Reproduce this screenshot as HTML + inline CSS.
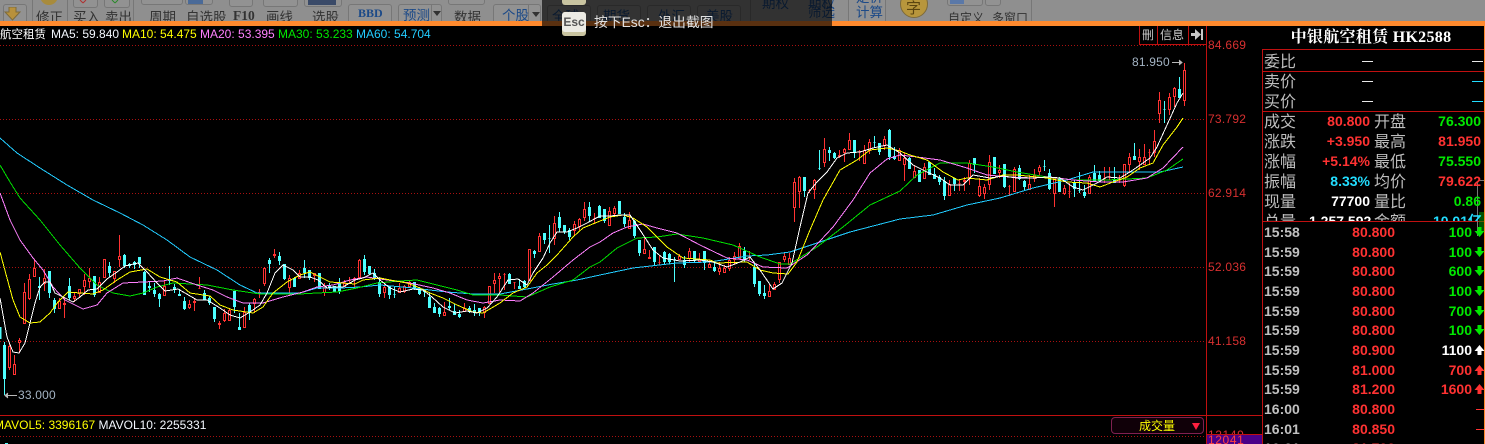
<!DOCTYPE html>
<html lang="zh"><head><meta charset="utf-8"><title>中银航空租赁</title>
<style>
html,body{margin:0;padding:0;background:#000;width:1485px;height:444px;overflow:hidden}
body{position:relative;font-family:"Liberation Sans","Noto Sans CJK SC",sans-serif}
.a{position:absolute;white-space:nowrap}
#tb{position:absolute;left:0;top:0;width:1485px;height:21px;background:#8f8f8f;overflow:hidden}
#tb .b{position:absolute;border:1px solid #777;border-radius:3px;box-sizing:border-box;background:#929292}
#tb .l{position:absolute;top:7px;font:13.5px/18px "WenQuanYi Zen Hei","Noto Sans CJK SC",sans-serif;color:#333;white-space:nowrap}
#tb .u{color:#1c4a88}
#tb .s{position:absolute;top:0;width:1px;height:21px;background:#777}
#or{position:absolute;left:0;top:21px;width:1485px;height:5px;background:#ff8a2e}
#ov{position:absolute;left:542px;top:0;width:290px;height:26px;background:rgba(0,0,0,.65)}
.ax{position:absolute;left:1208px;font-size:12px;line-height:14px;color:#d83030;letter-spacing:.25px}
.lb{position:absolute;font:16px/18px "WenQuanYi Zen Hei","Noto Sans CJK SC",sans-serif;color:#bdbdbd;white-space:nowrap}
.n{position:absolute;font:bold 14px/16px "Liberation Sans",sans-serif;white-space:nowrap;text-align:right}
.r{color:#ff3232}.g{color:#00e800}.c{color:#22ddff}.w{color:#fff}.t{color:#c0c0c0}
.v1{right:115px}.v2{right:4px}
.tm{left:1264px}.pr{right:90px}.vo{right:13px}
</style></head><body>

<div id="tb">
<div class="s" style="left:32px"></div><div class="s" style="left:67px"></div><div class="s" style="left:133px"></div><div class="s" style="left:750px"></div><div class="s" style="left:1031px"></div>
<div class="b" style="left:3px;top:4px;width:24px;height:30px"></div>
<svg class="a" style="left:4px;top:7px" width="20" height="14"><path d="M5 0h7v5h4l-7.500 8L1 5h4z" fill="#b8913c" stroke="#7d6a3a"/></svg>
<div class="a" style="left:40px;top:-13px;width:18px;height:18px;border-radius:50%;background:#a88b3c"></div>
<div class="l" style="left:36px">修正</div>
<div class="b" style="left:73px;top:-12px;width:25px;height:20px"></div><div class="b" style="left:104px;top:-12px;width:26px;height:20px"></div>
<svg class="a" style="left:78px;top:0" width="48" height="4"><path d="M2 0l3 3M8 0L5 3" stroke="#b03030" fill="none"/><path d="M34 0l3 3M40 0l-3 3" stroke="#2a8a2a" fill="none"/></svg>
<div class="l" style="left:73px">买入</div><div class="l" style="left:105px">卖出</div>
<div class="b" style="left:141px;top:-12px;width:42px;height:17px"></div><div class="b" style="left:185px;top:-12px;width:28px;height:17px"></div>
<div class="a" style="left:188px;top:-3px;width:15px;height:7px;background:#4a6a98"></div>
<div class="l" style="left:149px">周期</div><div class="l" style="left:186px">自选股</div>
<div class="b" style="left:229px;top:-12px;width:24px;height:19px"></div><div class="b" style="left:263px;top:-12px;width:35px;height:19px"></div><div class="b" style="left:304px;top:-12px;width:38px;height:19px"></div>
<div class="a" style="left:308px;top:-3px;width:28px;height:8px;background:#3a4a68"></div>
<div class="l" style="left:233px;font-family:'Liberation Serif',serif;font-weight:bold">F10</div>
<div class="l" style="left:266px">画线</div><div class="l" style="left:312px">选股</div>
<div class="b" style="left:348px;top:4px;width:44px;height:30px"></div>
<div class="l u" style="left:358px;top:4px;font:bold 12px/18px 'Liberation Serif',serif">BBD</div>
<div class="b" style="left:398px;top:4px;width:44px;height:30px"></div><div class="a" style="left:431px;top:4px;width:1px;height:17px;background:#777"></div>
<div class="l u" style="left:403px;top:5px">预测</div>
<svg class="a" style="left:432px;top:11px" width="10" height="6"><path d="M1 0h8l-4 5z" fill="#333"/></svg>
<div class="b" style="left:448px;top:-12px;width:37px;height:17px"></div>
<div class="l" style="left:454px">数据</div>
<div class="b" style="left:493px;top:4px;width:48px;height:30px"></div><div class="a" style="left:528px;top:4px;width:1px;height:17px;background:#777"></div>
<div class="l u" style="left:502px;top:5px">个股</div>
<svg class="a" style="left:531px;top:12px" width="10" height="6"><path d="M1 0h8l-4 5z" fill="#333"/></svg>
<div class="b" style="left:547px;top:5px;width:44px;height:30px"></div><div class="b" style="left:597px;top:5px;width:44px;height:30px"></div><div class="b" style="left:647px;top:5px;width:44px;height:30px"></div><div class="b" style="left:697px;top:5px;width:44px;height:30px"></div>
<div class="l u" style="left:552px;top:6px">全球</div><div class="l u" style="left:603px;top:6px">期货</div><div class="l u" style="left:658px;top:6px">外汇</div><div class="l u" style="left:706px;top:6px">美股</div>
<div class="b" style="left:848px;top:-8px;width:38px;height:40px"></div>
<div class="l u" style="left:762px;top:-7px">期权</div><div class="l u" style="left:808px;top:-7px">期权</div><div class="l u" style="left:808px;top:2px">筛选</div>
<div class="l u" style="left:856px;top:-13px">定价</div><div class="l u" style="left:856px;top:2px">计算</div>
<div class="a" style="left:900px;top:-10px;width:28px;height:28px;border-radius:50%;background:#b8963c;border:1px solid #7d6a3a;box-sizing:border-box"></div>
<div class="l" style="left:906px;top:-1px;color:#5a4410;font-size:15px">字</div>
<div class="b" style="left:947px;top:-10px;width:36px;height:16px"></div><div class="b" style="left:985px;top:-10px;width:16px;height:16px"></div>
<div class="a" style="left:950px;top:-4px;width:14px;height:8px;background:#5a78a8"></div>
<div class="l" style="left:948px;top:9px;font-size:12px">自定义</div><div class="l" style="left:992px;top:9px;font-size:12px">多窗口</div>
</div>
<div id="or"></div>

<div id="ov"><div class="a" style="left:20px;top:-4px;width:24px;height:9px;background:#c9c4a0;border-radius:3px"></div></div>
<div class="a" style="left:562px;top:12px;width:24px;height:24px;background:#c9c4a0;border-radius:3px"></div>
<div class="a" style="left:562px;top:12px;width:24px;height:20px;background:#ecebe4;border-radius:3px;color:#555;font:bold 12px/20px 'Liberation Sans',sans-serif;text-align:center">Esc</div>
<div class="a" style="left:594px;top:13px;color:#e0e0e0;font:13.8px/20px 'Liberation Sans','WenQuanYi Zen Hei','Noto Sans CJK SC',sans-serif">按下Esc：退出截图</div>

<svg class="a" style="left:0;top:0" width="1485" height="444" viewBox="0 0 1485 444">
<g stroke="#a81010" stroke-width="1" stroke-dasharray="1 2" shape-rendering="crispEdges">
<path d="M0 45.500H1206M0 119.500H1206M0 193.500H1206M0 267.500H1206M0 341.500H1206M0 436.500H1206"/>
</g>
<g stroke="#c01010" stroke-width="1" fill="none" shape-rendering="crispEdges">
<path d="M1206.500 26V444M1262.500 49V444M0 415.500H1262M1262 49.500H1484M1262 71.500H1484M1262 111.500H1484M1262 221.500H1484"/>
<path d="M1139.500 26V44.500H1206M1157.500 26V44.500M1188.500 26V44.500"/>
</g>
<path d="M1484.500 26V444" stroke="#ff8a2e"/>
<g shape-rendering="crispEdges">
<path stroke="#ff3232" fill="none" d="M9.500 343V370M14.500 355V375M19.500 338V353M24.500 283V323M29.500 274V300M34.500 259V276M44.500 269V291M59.500 298V308M64.500 297V318M74.500 293V302M79.500 289V298M84.500 274V295M89.500 268V288M99.500 277V292M104.500 259V277M114.500 271V283M119.500 235V267M164.500 280V296M189.500 300V309M194.500 299V311M199.500 277V289M219.500 321V329M224.500 309V322M229.500 308V321M244.500 307V327M254.500 298V313M259.500 289V298M264.500 267V286M274.500 249V258M289.500 275V295M299.500 270V278M314.500 273V282M324.500 283V296M344.500 280V287M349.500 277V283M354.500 277V287M359.500 259V277M384.500 282V298M399.500 283V293M404.500 285V293M409.500 281V288M444.500 302V316M464.500 303V312M484.500 306V318M489.500 286V303M494.500 273V293M499.500 273V292M504.500 273V290M514.500 282V289M529.500 249V281M539.500 233V252M554.500 216V245M574.500 221V235M579.500 218V230M584.500 202V221M594.500 213V224M609.500 207V225M614.500 206V215M629.500 212V228M644.500 238V254M649.500 250V258M659.500 255V265M679.500 254V260M689.500 248V263M699.500 253V262M709.500 260V268M719.500 262V275M724.500 265V273M729.500 257V271M734.500 252V265M739.500 243V258M749.500 251V260M769.500 284V296M774.500 282V290M779.500 262V283M784.500 253V262M789.500 253V264M794.500 178V222M799.500 176V208M809.500 189V193M814.500 179V199M824.500 138V167M839.500 150V158M844.500 148V162M849.500 133V149M859.500 150V161M864.500 145V163M869.500 139V154M884.500 136V150M899.500 148V160M904.500 153V181M914.500 165V178M924.500 163V179M949.500 180V196M959.500 180V191M964.500 177V191M969.500 160V185M979.500 178V197M984.500 184V199M989.500 155V190M999.500 165V178M1009.500 185V196M1014.500 167V191M1029.500 175V190M1034.500 169V182M1039.500 165V175M1054.500 178V207M1064.500 185V195M1069.500 183V198M1089.500 175V194M1104.500 167V183M1109.500 167V180M1119.500 175V183M1124.500 164V187M1129.500 153V173M1139.500 149V170M1144.500 144V164M1149.500 149V165M1154.500 130V157M1159.500 92V123M1169.500 93V115M1174.500 87V107M1184.500 63V106"/>
<path stroke="#ff3232" fill="#000" d="M8.500 346.500h2V367.500h-2zM13.500 364.500h2V374.500h-2zM18.500 340.500h2V342.500h-2zM23.500 292.500h2V323.500h-2zM28.500 279.500h2V298.500h-2zM33.500 268.500h2V276.500h-2zM43.500 278.500h2V283.500h-2zM58.500 301.500h2V308.500h-2zM63.500 303.500h2V304.500h-2zM73.500 296.500h2V298.500h-2zM78.500 289.500h2V293.500h-2zM83.500 280.500h2V286.500h-2zM88.500 278.500h2V281.500h-2zM98.500 282.500h2V292.500h-2zM103.500 259.500h2V277.500h-2zM113.500 271.500h2V278.500h-2zM118.500 256.500h2V259.500h-2zM163.500 286.500h2V295.500h-2zM188.500 304.500h2V307.500h-2zM193.500 301.500h2V302.500h-2zM198.500 288.500h2V288.500h-2zM218.500 323.500h2V324.500h-2zM223.500 313.500h2V320.500h-2zM228.500 310.500h2V320.500h-2zM243.500 312.500h2V327.500h-2zM253.500 299.500h2V303.500h-2zM258.500 292.500h2V293.500h-2zM263.500 268.500h2V283.500h-2zM273.500 254.500h2V255.500h-2zM288.500 278.500h2V287.500h-2zM298.500 273.500h2V278.500h-2zM313.500 273.500h2V275.500h-2zM323.500 287.500h2V292.500h-2zM343.500 283.500h2V286.500h-2zM348.500 280.500h2V280.500h-2zM353.500 278.500h2V279.500h-2zM358.500 260.500h2V277.500h-2zM383.500 287.500h2V292.500h-2zM398.500 288.500h2V292.500h-2zM403.500 286.500h2V291.500h-2zM408.500 282.500h2V286.500h-2zM443.500 312.500h2V315.500h-2zM463.500 308.500h2V311.500h-2zM483.500 307.500h2V312.500h-2zM488.500 286.500h2V303.500h-2zM493.500 280.500h2V283.500h-2zM498.500 276.500h2V278.500h-2zM503.500 274.500h2V274.500h-2zM513.500 282.500h2V282.500h-2zM528.500 249.500h2V280.500h-2zM538.500 236.500h2V251.500h-2zM553.500 223.500h2V238.500h-2zM573.500 224.500h2V230.500h-2zM578.500 219.500h2V226.500h-2zM583.500 209.500h2V217.500h-2zM593.500 218.500h2V218.500h-2zM608.500 211.500h2V225.500h-2zM613.500 208.500h2V213.500h-2zM628.500 220.500h2V228.500h-2zM643.500 249.500h2V253.500h-2zM648.500 257.500h2V258.500h-2zM658.500 262.500h2V262.500h-2zM678.500 256.500h2V259.500h-2zM688.500 251.500h2V258.500h-2zM698.500 259.500h2V261.500h-2zM708.500 264.500h2V267.500h-2zM718.500 268.500h2V271.500h-2zM723.500 268.500h2V272.500h-2zM728.500 260.500h2V268.500h-2zM733.500 256.500h2V259.500h-2zM738.500 246.500h2V258.500h-2zM748.500 256.500h2V256.500h-2zM768.500 291.500h2V296.500h-2zM773.500 284.500h2V289.500h-2zM778.500 262.500h2V279.500h-2zM783.500 256.500h2V259.500h-2zM788.500 258.500h2V264.500h-2zM793.500 182.500h2V207.500h-2zM798.500 177.500h2V191.500h-2zM808.500 190.500h2V190.500h-2zM813.500 180.500h2V189.500h-2zM823.500 149.500h2V162.500h-2zM838.500 155.500h2V156.500h-2zM843.500 149.500h2V152.500h-2zM848.500 140.500h2V149.500h-2zM858.500 151.500h2V151.500h-2zM863.500 150.500h2V163.500h-2zM868.500 142.500h2V150.500h-2zM883.500 139.500h2V145.500h-2zM898.500 150.500h2V160.500h-2zM903.500 158.500h2V164.500h-2zM913.500 171.500h2V177.500h-2zM923.500 167.500h2V178.500h-2zM948.500 184.500h2V195.500h-2zM958.500 183.500h2V183.500h-2zM963.500 180.500h2V181.500h-2zM968.500 163.500h2V177.500h-2zM978.500 186.500h2V195.500h-2zM983.500 187.500h2V193.500h-2zM988.500 162.500h2V184.500h-2zM998.500 170.500h2V172.500h-2zM1008.500 186.500h2V186.500h-2zM1013.500 169.500h2V191.500h-2zM1028.500 184.500h2V189.500h-2zM1033.500 175.500h2V178.500h-2zM1038.500 167.500h2V171.500h-2zM1053.500 178.500h2V193.500h-2zM1063.500 188.500h2V193.500h-2zM1068.500 191.500h2V191.500h-2zM1088.500 177.500h2V193.500h-2zM1103.500 178.500h2V178.500h-2zM1108.500 176.500h2V176.500h-2zM1118.500 180.500h2V180.500h-2zM1123.500 164.500h2V185.500h-2zM1128.500 157.500h2V164.500h-2zM1138.500 157.500h2V161.500h-2zM1143.500 157.500h2V164.500h-2zM1148.500 152.500h2V152.500h-2zM1153.500 141.500h2V152.500h-2zM1158.500 100.500h2V113.500h-2zM1168.500 97.500h2V109.500h-2zM1173.500 88.500h2V96.500h-2zM1183.500 70.500h2V100.500h-2z"/>
<path stroke="#4dffff" fill="#4dffff" d="M0 327.500h1V338.500H0zM4.500 342V395M3.500 345.500h2V378.500h-2zM39.500 277V300M38.500 286.500h2V287.500h-2zM49.500 271V298M48.500 271.500h2V292.500h-2zM54.500 298V313M53.500 300.500h2V308.500h-2zM69.500 278V300M68.500 286.500h2V297.500h-2zM94.500 276V297M93.500 276.500h2V294.500h-2zM109.500 262V277M108.500 266.500h2V272.500h-2zM124.500 254V268M123.500 255.500h2V265.500h-2zM129.500 263V268M128.500 264.500h2V265.500h-2zM134.500 261V269M133.500 262.500h2V264.500h-2zM139.500 257V268M138.500 257.500h2V263.500h-2zM144.500 271V295M143.500 272.500h2V294.500h-2zM149.500 281V292M148.500 286.500h2V287.500h-2zM154.500 283V297M153.500 290.500h2V293.500h-2zM159.500 293V307M158.500 294.500h2V298.500h-2zM169.500 266V285M168.500 279.500h2V280.500h-2zM174.500 284V293M173.500 287.500h2V288.500h-2zM179.500 289V296M178.500 294.500h2V295.500h-2zM184.500 297V310M183.500 301.500h2V308.500h-2zM204.500 290V300M203.500 293.500h2V299.500h-2zM209.500 296V305M208.500 298.500h2V302.500h-2zM214.500 307V322M213.500 307.500h2V318.500h-2zM234.500 291V313M233.500 291.500h2V306.500h-2zM239.500 313V330M238.500 327.500h2V329.500h-2zM249.500 303V320M248.500 305.500h2V312.500h-2zM269.500 258V273M268.500 260.500h2V263.500h-2zM279.500 252V265M278.500 256.500h2V260.500h-2zM284.500 264V280M283.500 264.500h2V278.500h-2zM294.500 277V287M293.500 278.500h2V286.500h-2zM304.500 260V278M303.500 268.500h2V272.500h-2zM309.500 270V280M308.500 270.500h2V277.500h-2zM319.500 273V288M318.500 273.500h2V288.500h-2zM329.500 283V290M328.500 285.500h2V287.500h-2zM334.500 286V292M333.500 286.500h2V291.500h-2zM339.500 278V294M338.500 283.500h2V291.500h-2zM364.500 255V275M363.500 259.500h2V271.500h-2zM369.500 266V275M368.500 266.500h2V273.500h-2zM374.500 269V280M373.500 273.500h2V277.500h-2zM379.500 277V297M378.500 282.500h2V293.500h-2zM389.500 286V299M388.500 286.500h2V294.500h-2zM394.500 286V298M393.500 294.500h2V294.500h-2zM414.500 282V290M413.500 282.500h2V288.500h-2zM419.500 287V295M418.500 288.500h2V293.500h-2zM424.500 290V297M423.500 290.500h2V291.500h-2zM429.500 292V308M428.500 297.500h2V307.500h-2zM434.500 303V313M433.500 307.500h2V312.500h-2zM439.500 307V317M438.500 308.500h2V313.500h-2zM449.500 298V310M448.500 306.500h2V307.500h-2zM454.500 304V315M453.500 311.500h2V314.500h-2zM459.500 310V318M458.500 314.500h2V316.500h-2zM469.500 306V313M468.500 308.500h2V311.500h-2zM474.500 304V316M473.500 310.500h2V311.500h-2zM479.500 308V316M478.500 308.500h2V312.500h-2zM509.500 273V283M508.500 274.500h2V283.500h-2zM519.500 279V289M518.500 286.500h2V288.500h-2zM524.500 280V288M523.500 281.500h2V286.500h-2zM534.500 250V258M533.500 251.500h2V253.500h-2zM544.500 233V244M543.500 233.500h2V239.500h-2zM549.500 225V253M548.500 238.500h2V238.500h-2zM559.500 212V232M558.500 217.500h2V227.500h-2zM564.500 225V234M563.500 225.500h2V231.500h-2zM569.500 228V240M568.500 230.500h2V236.500h-2zM589.500 202V222M588.500 207.500h2V215.500h-2zM599.500 205V218M598.500 206.500h2V217.500h-2zM604.500 209V223M603.500 209.500h2V220.500h-2zM619.500 201V213M618.500 201.500h2V213.500h-2zM624.500 213V227M623.500 217.500h2V223.500h-2zM634.500 220V238M633.500 221.500h2V235.500h-2zM639.500 240V256M638.500 240.500h2V252.500h-2zM654.500 247V265M653.500 247.500h2V261.500h-2zM664.500 251V264M663.500 252.500h2V261.500h-2zM669.500 253V264M668.500 254.500h2V261.500h-2zM674.500 257V282M673.500 259.500h2V259.500h-2zM684.500 256V268M683.500 260.500h2V264.500h-2zM694.500 251V263M693.500 251.500h2V260.500h-2zM704.500 251V270M703.500 251.500h2V262.500h-2zM714.500 262V272M713.500 267.500h2V270.500h-2zM744.500 247V262M743.500 251.500h2V258.500h-2zM754.500 263V287M753.500 267.500h2V283.500h-2zM759.500 281V296M758.500 281.500h2V293.500h-2zM764.500 285V299M763.500 293.500h2V295.500h-2zM804.500 177V197M803.500 177.500h2V190.500h-2zM819.500 150V170M818.500 168.500h2V168.500h-2zM829.500 147V161M828.500 150.500h2V152.500h-2zM834.500 152V159M833.500 153.500h2V157.500h-2zM854.500 140V158M853.500 140.500h2V152.500h-2zM874.500 136V147M873.500 142.500h2V142.500h-2zM879.500 143V155M878.500 143.500h2V151.500h-2zM889.500 129V160M888.500 130.500h2V156.500h-2zM894.500 147V160M893.500 156.500h2V158.500h-2zM909.500 157V169M908.500 158.500h2V168.500h-2zM919.500 170V181M918.500 170.500h2V181.500h-2zM929.500 162V174M928.500 162.500h2V174.500h-2zM934.500 168V178M933.500 174.500h2V178.500h-2zM939.500 175V185M938.500 177.500h2V181.500h-2zM944.500 177V200M943.500 181.500h2V195.500h-2zM954.500 178V191M953.500 178.500h2V183.500h-2zM974.500 158V173M973.500 158.500h2V164.500h-2zM994.500 157V174M993.500 157.500h2V173.500h-2zM1004.500 164V188M1003.500 164.500h2V186.500h-2zM1019.500 165V180M1018.500 168.500h2V178.500h-2zM1024.500 180V191M1023.500 181.500h2V186.500h-2zM1044.500 160V171M1043.500 166.500h2V166.500h-2zM1049.500 169V190M1048.500 173.500h2V188.500h-2zM1059.500 177V192M1058.500 178.500h2V191.500h-2zM1074.500 180V197M1073.500 183.500h2V188.500h-2zM1079.500 172V193M1078.500 190.500h2V190.500h-2zM1084.500 185V198M1083.500 192.500h2V195.500h-2zM1094.500 165V181M1093.500 173.500h2V180.500h-2zM1099.500 171V181M1098.500 175.500h2V180.500h-2zM1114.500 167V183M1113.500 179.500h2V182.500h-2zM1134.500 143V160M1133.500 156.500h2V159.500h-2zM1164.500 101V123M1163.500 109.500h2V109.500h-2zM1179.500 77V97M1178.500 89.500h2V97.500h-2z"/>
</g>
<g fill="none" stroke-width="1" stroke-linejoin="round" shape-rendering="crispEdges">
<polyline stroke="#22ccff" points="0,138 17,153 40,168 67,185 93,200 120,213 143,225 167,240 190,257 217,270 240,285 257,293 300,293 317,288 340,288 360,287 380,285 413,288 447,292 473,294 500,294 527,289 553,284 577,280 600,275 633,268 677,263 710,262 747,256 767,255 790,252 817,243 850,232 900,219 933,215 967,205 1000,198 1033,188 1067,180 1093,172 1133,172 1160,172 1183,167"/>
<polyline stroke="#00e000" points="0,165 10,182 20,198 40,220 60,245 80,268 97,285 113,293 130,296 143,293 157,287 173,283 207,285 233,290 260,294 300,294 317,293 337,292 357,288 377,283 400,281 417,280 433,284 457,290 473,295 500,295 527,297 550,287 573,280 590,267 600,262 617,248 637,238 657,237 677,234 703,238 733,245 760,257 780,264 790,264 817,247 843,227 870,205 900,191 917,175 940,163 967,163 993,167 1017,172 1047,177 1073,180 1107,180 1147,178 1167,170 1183,159"/>
<polyline stroke="#ff80ff" points="0,193 10,220 20,240 33,258 43,270 53,287 65,300 83,309 97,305 107,293 123,283 143,282 163,281 177,278 197,285 213,290 227,297 243,303 263,303 283,297 303,292 317,287 333,285 350,280 367,277 387,280 410,283 433,288 450,293 467,300 483,303 500,300 520,301 533,293 553,277 573,260 590,247 600,242 613,233 627,227 643,224 657,228 677,233 700,245 727,258 747,260 763,267 787,268 807,255 833,227 853,200 870,173 887,159 900,155 917,157 940,160 967,168 987,175 1010,177 1033,178 1050,177 1073,180 1100,182 1123,182 1147,178 1163,168 1183,147"/>
<polyline stroke="#ffff00" points="0,252 7,278 13,300 20,317 30,323 40,322 50,313 58,302 68,292 80,293 93,294 103,290 117,280 130,272 147,269 160,277 177,282 190,293 210,296 220,305 233,310 253,313 263,307 273,293 287,282 300,275 310,272 320,277 330,282 343,283 355,284 363,280 380,278 390,280 407,283 420,288 430,293 443,298 457,305 473,312 483,313 500,303 513,293 527,287 537,273 547,265 557,255 573,237 583,228 600,221 610,217 623,215 633,218 647,227 667,247 683,258 710,260 717,263 747,262 760,270 773,273 788,274 797,262 810,230 823,200 840,170 857,160 870,150 887,148 900,151 910,155 927,160 943,172 958,180 967,178 987,180 1003,175 1017,175 1047,178 1067,182 1087,183 1100,187 1113,182 1127,177 1140,168 1153,163 1163,145 1177,127 1183,118"/>
<polyline stroke="#ffffff" points="0,298 7,337 13,352 19,353 25,343 30,323 35,303 40,287 45,282 50,282 55,293 65,298 73,302 80,297 88,290 97,289 107,279 117,272 125,266 138,263 147,272 157,283 165,291 178,289 185,293 197,300 207,300 220,308 230,315 240,318 250,312 260,305 267,293 275,273 283,265 293,270 300,277 310,277 318,280 327,288 333,287 343,287 355,280 363,278 373,273 380,280 390,288 400,292 413,289 423,290 432,297 443,307 455,313 467,311 477,313 487,308 497,297 508,280 518,279 527,285 533,273 543,258 550,243 557,232 567,232 577,228 587,223 600,216 610,216 620,215 630,215 642,233 653,250 663,258 680,261 700,260 713,262 727,267 740,262 750,257 760,270 773,289 782,283 792,263 800,227 808,193 817,182 827,172 837,158 847,153 860,152 873,148 887,145 900,153 913,165 927,172 940,178 950,185 963,185 973,175 990,178 1003,176 1017,178 1033,178 1047,177 1060,178 1073,187 1083,190 1097,183 1107,177 1120,178 1133,170 1150,158 1157,147 1167,125 1177,103 1183,93"/>
</g>
<path d="M1172 62.500H1182M1179 60l3 2.500-3 2.500M5 395.500H17M8 393l-3 2.500 3 2.500" stroke="#b8b8b8" fill="#b8b8b8"/>
<path d="M1191 33h4v-4l6 5.500-6 5.500v-4h-4zM1201 29h2v11h-2z" fill="#c8c8c8"/>
<path d="M5 443h3v1H5z" fill="#4dffff"/>
<!-- scroll handle -->
<path d="M1484 180.500h-4q-2.500 0-2.500 3V236" fill="none" stroke="#777"/>
<path d="M1479 213h5M1479 215h5M1479 217h5M1479 219h5M1479 221h5M1479 223h5M1479 225h5M1479 227h5M1479 229h5M1479 231h5" stroke="#00a000" shape-rendering="crispEdges"/>
<!-- tick arrows -->
<g fill="#00e800">
<path d="M1477.500 227h4v4h3l-5 6-5-6h3z"/>
<path d="M1477.500 247h4v4h3l-5 6-5-6h3z"/>
<path d="M1477.500 266h4v4h3l-5 6-5-6h3z"/>
<path d="M1477.500 286h4v4h3l-5 6-5-6h3z"/>
<path d="M1477.500 306h4v4h3l-5 6-5-6h3z"/>
<path d="M1477.500 325h4v4h3l-5 6-5-6h3z"/>
</g>
<path fill="#fff" d="M1479.500 345l5 6h-3v4h-4v-4h-3z"/>
<g fill="#ff3232"><path d="M1479.500 365l5 6h-3v4h-4v-4h-3z"/><path d="M1479.500 384l5 6h-3v4h-4v-4h-3z"/></g>
<path stroke="#ff3232" d="M1476 409.500h8M1476 429.500h8"/>
</svg>

<div class="a" style="left:0;top:27px;font-size:12px;line-height:14px">
<span class="a" style="left:0;color:#fff;font-family:'WenQuanYi Zen Hei','Noto Sans CJK SC',sans-serif;font-size:11.5px">航空租赁</span>
<span class="a" style="left:51px;color:#f4f8ff">MA5: 59.840</span>
<span class="a" style="left:122px;color:#ffff00">MA10: 54.475</span>
<span class="a" style="left:200px;color:#ff80ff">MA20: 53.395</span>
<span class="a" style="left:278px;color:#00e800">MA30: 53.233</span>
<span class="a" style="left:356px;color:#22ccff">MA60: 54.704</span>
</div>

<div class="a" style="left:1142px;top:27px;font:12px/16px 'WenQuanYi Zen Hei','Noto Sans CJK SC',sans-serif;color:#c8c8c8">刪</div>
<div class="a" style="left:1160px;top:27px;font:12px/16px 'WenQuanYi Zen Hei','Noto Sans CJK SC',sans-serif;color:#c8c8c8">信息</div>

<div class="ax" style="top:38px">84.669</div>
<div class="ax" style="top:112px">73.792</div>
<div class="ax" style="top:186px">62.914</div>
<div class="ax" style="top:260px">52.036</div>
<div class="ax" style="top:334px">41.158</div>
<div class="a" style="left:1208px;top:415px;width:54px;height:19px;overflow:hidden"><span class="ax" style="left:0;top:13px;letter-spacing:.6px">12149</span></div>
<div class="a" style="left:1207px;top:434px;width:55px;height:10px;background:#4a0088;border-top:1px solid #c01010;box-sizing:border-box;overflow:hidden"><span class="ax" style="left:1px;top:-2px;letter-spacing:.6px;color:#ff4040">12041</span></div>

<div class="a" style="left:1132px;top:55px;font-size:12px;line-height:14px;color:#a4b4c4;letter-spacing:.2px">81.950</div>
<div class="a" style="left:18px;top:388px;font-size:12px;line-height:14px;color:#a4b4c4;letter-spacing:.2px">33.000</div>

<div class="a" style="left:-6px;top:418px;font-size:12px;line-height:14px;color:#ffff00">MAVOL5: 3396167 <span style="color:#f4f8ff">MAVOL10: 2255331</span></div>
<div class="a" style="left:1111px;top:417px;width:93px;height:17px;box-sizing:border-box;border:1px solid #802050;border-radius:4px;background:#100008;color:#ffff00;font:12px/15px 'WenQuanYi Zen Hei','Noto Sans CJK SC',sans-serif;padding-left:27px">成交量</div>
<svg class="a" style="left:1191px;top:422px" width="10" height="9"><path d="M1 1h8l-4 7z" fill="#ff2040"/></svg>

<div class="a" style="left:1262px;top:28px;width:218px;text-align:center;color:#fff;font:bold 16px/20px 'Liberation Serif','Noto Serif CJK SC',serif;letter-spacing:.3px">中银航空租赁 HK2588</div>

<div class="lb" style="left:1264px;top:51px">委比</div>
<div class="lb" style="left:1264px;top:71px">卖价</div>
<div class="lb" style="left:1264px;top:91px">买价</div>
<div class="lb" style="left:1264px;top:111px">成交</div><div class="lb" style="left:1374px;top:111px">开盘</div>
<div class="lb" style="left:1264px;top:131px">涨跌</div><div class="lb" style="left:1374px;top:131px">最高</div>
<div class="lb" style="left:1264px;top:151px">涨幅</div><div class="lb" style="left:1374px;top:151px">最低</div>
<div class="lb" style="left:1264px;top:171px">振幅</div><div class="lb" style="left:1374px;top:171px">均价</div>
<div class="lb" style="left:1264px;top:191px">现量</div><div class="lb" style="left:1374px;top:191px">量比</div>

<svg class="a" style="left:1262px;top:50px" width="222" height="60"><path d="M100 11.500h11M210 11.500h11M100 31.500h11M100 51.500h11" stroke="#e8e8e8"/><path d="M210 31.500h11M210 51.500h11" stroke="#22ddff"/></svg>

<div class="n r v1" style="top:113px">80.800</div><div class="n g v2" style="top:113px">76.300</div>
<div class="n r v1" style="top:133px">+3.950</div><div class="n r v2" style="top:133px">81.950</div>
<div class="n r v1" style="top:153px">+5.14%</div><div class="n g v2" style="top:153px">75.550</div>
<div class="n c v1" style="top:173px">8.33%</div><div class="n r v2" style="top:173px">79.622</div>
<div class="n w v1" style="top:193px">77700</div><div class="n g v2" style="top:193px">0.86</div>
<div class="a" style="left:1263px;top:211px;width:221px;height:10px;overflow:hidden">
<div class="lb" style="left:1px;top:0">总量</div><div class="n" style="left:46px;top:2px;color:#fff">1,257,592</div><div class="lb" style="left:111px;top:0">金额</div><div class="n c" style="right:2px;top:2px">10.01亿</div>
</div>

<div class="n t tm" style="top:224px">15:58</div><div class="n r pr" style="top:224px">80.800</div><div class="n g vo" style="top:224px">100</div>
<div class="n t tm" style="top:244px">15:59</div><div class="n r pr" style="top:244px">80.800</div><div class="n g vo" style="top:244px">100</div>
<div class="n t tm" style="top:263px">15:59</div><div class="n r pr" style="top:263px">80.800</div><div class="n g vo" style="top:263px">600</div>
<div class="n t tm" style="top:283px">15:59</div><div class="n r pr" style="top:283px">80.800</div><div class="n g vo" style="top:283px">100</div>
<div class="n t tm" style="top:303px">15:59</div><div class="n r pr" style="top:303px">80.800</div><div class="n g vo" style="top:303px">700</div>
<div class="n t tm" style="top:322px">15:59</div><div class="n r pr" style="top:322px">80.800</div><div class="n g vo" style="top:322px">100</div>
<div class="n t tm" style="top:342px">15:59</div><div class="n r pr" style="top:342px">80.900</div><div class="n w vo" style="top:342px">1100</div>
<div class="n t tm" style="top:362px">15:59</div><div class="n r pr" style="top:362px">81.000</div><div class="n r vo" style="top:362px">700</div>
<div class="n t tm" style="top:381px">15:59</div><div class="n r pr" style="top:381px">81.200</div><div class="n r vo" style="top:381px">1600</div>
<div class="n t tm" style="top:401px">16:00</div><div class="n r pr" style="top:401px">80.800</div>
<div class="n t tm" style="top:421px">16:01</div><div class="n r pr" style="top:421px">80.850</div>
<div class="a" style="left:1263px;top:440px;width:221px;height:4px;overflow:hidden"><div class="n t" style="left:1px;top:0">16:01</div><div class="n r" style="right:89px;top:0">81.700</div></div>
</body></html>
